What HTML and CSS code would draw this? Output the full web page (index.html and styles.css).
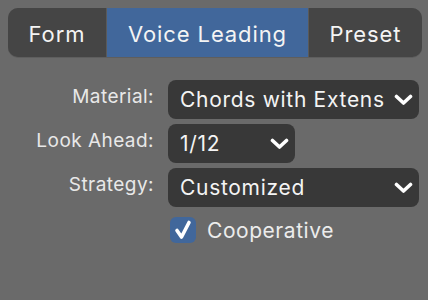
FILE: index.html
```html
<!DOCTYPE html>
<html>
<head>
    <title>Voice Leading</title>
    <link rel="stylesheet" href="styles.css">
</head>
<body>
    <div class="tabs">
        <div class="tab tab-form">Form</div>
        <div class="tab tab-voice active">Voice Leading</div>
        <div class="tab tab-preset">Preset</div>
    </div>

    <div class="form">
        <label class="label">Material:</label>
        <div class="select wide">
            <span class="value">Chords with Extens</span>
            <svg class="chevron" width="19" height="12" viewBox="0 0 19 12"><path d="M2.5 2.5 L9.5 9 L16.5 2.5" fill="none" stroke="#fff" stroke-width="3.6" stroke-linecap="round" stroke-linejoin="round"/></svg>
        </div>

        <label class="label">Look Ahead:</label>
        <div class="select narrow">
            <span class="value">1/12</span>
            <svg class="chevron" width="19" height="12" viewBox="0 0 19 12"><path d="M2.5 2.5 L9.5 9 L16.5 2.5" fill="none" stroke="#fff" stroke-width="3.6" stroke-linecap="round" stroke-linejoin="round"/></svg>
        </div>

        <label class="label">Strategy:</label>
        <div class="select wide">
            <span class="value">Customized</span>
            <svg class="chevron" width="19" height="12" viewBox="0 0 19 12"><path d="M2.5 2.5 L9.5 9 L16.5 2.5" fill="none" stroke="#fff" stroke-width="3.6" stroke-linecap="round" stroke-linejoin="round"/></svg>
        </div>

        <div></div>
        <div class="check-row">
            <span class="checkbox">
                <svg width="26" height="26" viewBox="0 0 26 26"><path d="M7 13.5 L11.5 20 L19 5.5" fill="none" stroke="#fff" stroke-width="3.6" stroke-linecap="round" stroke-linejoin="round"/></svg>
            </span>
            <span class="check-label">Cooperative</span>
        </div>
    </div>
</body>
</html>
```

FILE: styles.css
```css
body {
    margin: 0;
    background-color: #6a6a6a;
    font-family: Inter, "Noto Sans", sans-serif;
    color: #f2f2f2;
}
.tabs {
    display: flex;
    height: 49px;
    margin: 8px 6px 0 8px;
    border-radius: 10px;
    overflow: hidden;
    background-color: #5a5a5a;
    gap: 1px;
    box-shadow: 0 1px 0 #5e5e5e;
}
.tab {
    display: flex;
    align-items: center;
    justify-content: center;
    padding-top: 3px;
    background-color: #454545;
    font-size: 22px;
    letter-spacing: 0.9px;
    color: #f4f4f4;
}
.tab-form {
    width: 98px;
}
.tab-voice {
    width: 201px;
}
.tab-preset {
    flex: 1;
}
.tab.active {
    background-color: #41679b;
}
.form {
    display: grid;
    grid-template-columns: 154px 251px;
    column-gap: 14px;
    row-gap: 5px;
    margin-top: 23px;
}
.label {
    text-align: right;
    font-size: 19px;
    letter-spacing: 0.45px;
    color: #e8e8e8;
    padding-top: 5px;
}
.select {
    display: flex;
    align-items: center;
    height: 39px;
    padding: 0 6px 0 12px;
    box-sizing: border-box;
    border-radius: 8px;
    background-color: #383838;
    font-size: 21px;
    letter-spacing: 0.7px;
    color: #f4f4f4;
}
.select.narrow {
    width: 127px;
}
.value {
    flex: 1;
    overflow: hidden;
    white-space: nowrap;
}
.chevron {
    flex: none;
}
.check-row {
    display: flex;
    align-items: center;
    gap: 11px;
    margin-top: 5px;
    padding-left: 2px;
}
.checkbox {
    width: 26px;
    height: 26px;
    border-radius: 6px;
    background-color: #41679b;
}
.checkbox svg {
    display: block;
}
.check-label {
    font-size: 21px;
    letter-spacing: 0.55px;
    color: #ececec;
}
```
